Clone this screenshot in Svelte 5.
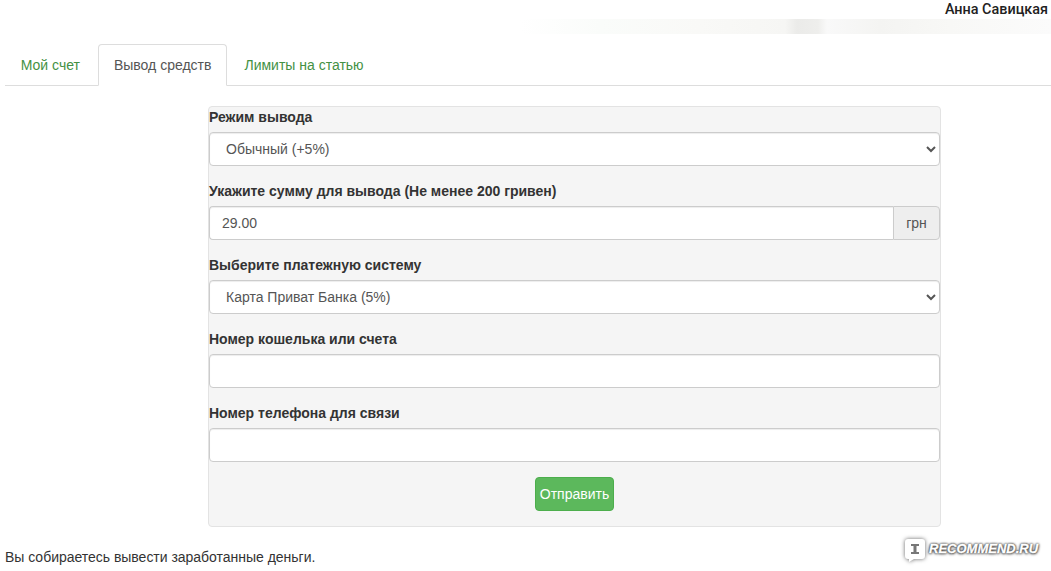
<script>
  let mode = $state('Обычный (+5%)');
  let system = $state('Карта Приват Банка (5%)');
  let amount = $state('29.00');
  let wallet = $state('');
  let phone = $state('');
  const tabs = ['Мой счет', 'Вывод средств', 'Лимиты на статью'];
  let current = $state('Вывод средств');
</script>

<div class="page">
  <header class="top">
    <div class="user">Анна Савицкая</div>
    <div class="strip"></div>
  </header>

  <ul class="tabs">
    {#each tabs as tab}
      <li class="tab" class:active={current === tab}>
        <a href="#{tab}" onclick={(e) => { e.preventDefault(); current = tab; }}>{tab}</a>
      </li>
    {/each}
  </ul>

  <form class="well" onsubmit={(e) => e.preventDefault()}>
    <div class="group">
      <label for="mode">Режим вывода</label>
      <select id="mode" class="control" bind:value={mode}>
        <option>Обычный (+5%)</option>
        <option>Срочный (+10%)</option>
      </select>
    </div>
    <div class="group">
      <label for="amount">Укажите сумму для вывода (Не менее 200 гривен)</label>
      <div class="input-group">
        <input id="amount" class="control" type="text" bind:value={amount} />
        <span class="addon">грн</span>
      </div>
    </div>
    <div class="group">
      <label for="system">Выберите платежную систему</label>
      <select id="system" class="control" bind:value={system}>
        <option>Карта Приват Банка (5%)</option>
        <option>Другая карта (5%)</option>
      </select>
    </div>
    <div class="group">
      <label for="wallet">Номер кошелька или счета</label>
      <input id="wallet" class="control" type="text" bind:value={wallet} />
    </div>
    <div class="group">
      <label for="phone">Номер телефона для связи</label>
      <input id="phone" class="control" type="text" bind:value={phone} />
    </div>
    <div class="actions">
      <button class="submit" type="submit">Отправить</button>
    </div>
  </form>

  <p class="note">Вы собираетесь вывести заработанные деньги.</p>

  <div class="watermark">
    <svg viewBox="0 0 22 25" width="22" height="25" class="mark">
      <path d="M4 1h14a3 3 0 013 3v14a3 3 0 01-3 3H10l-5 3v-3H4a3 3 0 01-3-3V4a3 3 0 013-3z" fill="#fff" />
      <path d="M7 6h8v2h-2.500v6H15v2H7v-2h2.500V8H7z" fill="#777" />
    </svg>
    <span class="mark-text">RECOMMEND.RU</span>
  </div>
</div>

<style>
  :global(body) {
    margin: 0;
    background: #fff;
    font-family: "Liberation Sans", Arial, sans-serif;
    font-size: 14px;
    line-height: 20px;
    color: #333;
  }
  .page {
    position: relative;
    height: 571px;
    overflow: hidden;
  }
  .top {
    height: 44px;
  }
  .user {
    height: 19px;
    line-height: 20px;
    padding-right: 3px;
    text-align: right;
    font-family: Roboto, "Liberation Sans", sans-serif;
    font-size: 14.4px;
    font-weight: 500;
    color: #222;
  }
  .strip {
    height: 15px;
    background: linear-gradient(90deg,
      #fff 0, #fff 520px, #fafcfa 600px, #f9f9f7 700px, #f6f6f4 785px,
      #ebebe9 797px, #eeeeec 818px, #f9f9f9 827px, #f4f4f2 880px, #f8f8f6 950px, #fbfbfb 1051px);
  }

  .tabs {
    display: flex;
    list-style: none;
    margin: 0 0 20px 5px;
    padding: 0;
    border-bottom: 1px solid #ddd;
    height: 41px;
  }
  .tab {
    margin-right: 2px;
    height: 42px;
  }
  .tab a {
    display: block;
    padding: 10px 14.75px;
    border: 1px solid transparent;
    border-radius: 4px 4px 0 0;
    color: #449144;
    text-decoration: none;
  }
  .tab.active a {
    padding-left: 15.25px;
    padding-right: 14.25px;
    color: #555;
    background: #fff;
    border-color: #ddd #ddd transparent;
  }

  .well {
    width: 731px;
    margin-left: 208px;
    background: #f5f5f5;
    border: 1px solid #e3e3e3;
    border-radius: 4px;
  }
  .group {
    margin-bottom: 15px;
  }
  label {
    display: block;
    margin-bottom: 5px;
    font-weight: 700;
  }
  .control {
    display: block;
    box-sizing: border-box;
    width: 100%;
    height: 34px;
    padding: 6px 12px;
    font: inherit;
    color: #555;
    background: #fff;
    border: 1px solid #ccc;
    border-radius: 4px;
    box-shadow: inset 0 1px 1px rgba(0, 0, 0, 0.075);
  }
  .input-group {
    display: flex;
  }
  .input-group .control {
    flex: 1;
    min-width: 0;
    border-radius: 4px 0 0 4px;
    border-right: 0;
  }
  .addon {
    box-sizing: border-box;
    width: 47px;
    height: 34px;
    padding: 6px 12px;
    color: #555;
    text-align: center;
    background: #eee;
    border: 1px solid #ccc;
    border-radius: 0 4px 4px 0;
  }
  .actions {
    display: flex;
    justify-content: center;
    margin-bottom: 15px;
  }
  .submit {
    box-sizing: border-box;
    height: 34px;
    width: 79px;
    padding: 6px 0;
    font: inherit;
    color: #fff;
    background: #5cb85c;
    border: 1px solid #4cae4c;
    border-radius: 4px;
  }
  .note {
    margin: 20px 0 0 5px;
    letter-spacing: -0.02px;
  }

  /* site watermark over the corner */
  .watermark {
    position: absolute;
    left: 904px;
    top: 538px;
    display: flex;
    align-items: center;
    gap: 3px;
  }
  .mark {
    filter: drop-shadow(0 0 2px rgba(0, 0, 0, 0.6));
  }
  .mark-text {
    font-size: 13px;
    font-weight: 700;
    font-style: italic;
    color: #fff;
    -webkit-text-stroke: 0.3px #fff;
    text-shadow: 0 0 2px #444, 0 0 2px #444, 0 0 3px #666, 0 1px 3px #666;
    margin-top: -4px;
  }
</style>
